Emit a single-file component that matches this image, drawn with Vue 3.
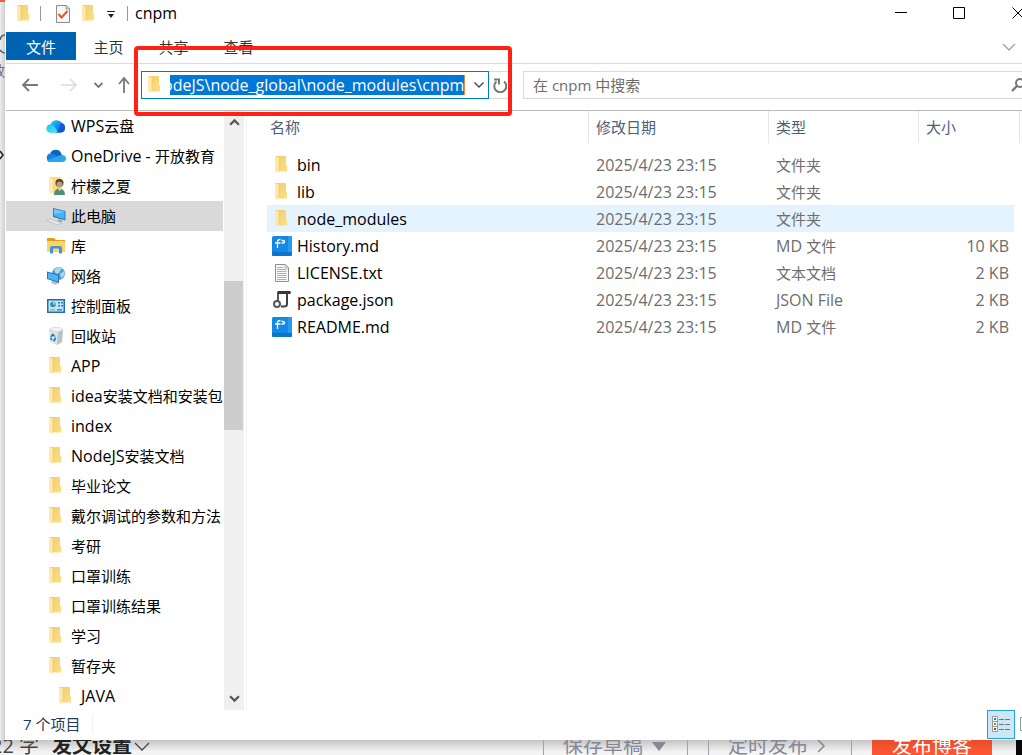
<script setup>
import { ref, onMounted } from 'vue'

const address = ref(null)
onMounted(() => {
  address.value.scrollLeft = address.value.scrollWidth
})

const places = [
  { name: 'WPS云盘', icon: 'wps' },
  { name: 'OneDrive - 开放教育', icon: 'onedrive' },
  { name: '柠檬之夏', icon: 'user' },
  { name: '此电脑', icon: 'pc', selected: true },
  { name: '库', icon: 'library' },
  { name: '网络', icon: 'network' },
  { name: '控制面板', icon: 'control' },
  { name: '回收站', icon: 'recycle' },
  { name: 'APP', icon: 'folder' },
  { name: 'idea安装文档和安装包', icon: 'folder' },
  { name: 'index', icon: 'folder' },
  { name: 'NodeJS安装文档', icon: 'folder' },
  { name: '毕业论文', icon: 'folder' },
  { name: '戴尔调试的参数和方法', icon: 'folder' },
  { name: '考研', icon: 'folder' },
  { name: '口罩训练', icon: 'folder' },
  { name: '口罩训练结果', icon: 'folder' },
  { name: '学习', icon: 'folder' },
  { name: '暂存夹', icon: 'folder' },
  { name: 'JAVA', icon: 'folder', nested: true }
]

const date = '2025/4/23 23:15'
const files = [
  { name: 'bin', icon: 'folder', type: '文件夹', size: '' },
  { name: 'lib', icon: 'folder', type: '文件夹', size: '' },
  { name: 'node_modules', icon: 'folder', type: '文件夹', size: '', hover: true },
  { name: 'History.md', icon: 'md', type: 'MD 文件', size: '10 KB' },
  { name: 'LICENSE.txt', icon: 'txt', type: '文本文档', size: '2 KB' },
  { name: 'package.json', icon: 'json', type: 'JSON File', size: '2 KB' },
  { name: 'README.md', icon: 'md', type: 'MD 文件', size: '2 KB' }
]

// Latin runs are set one pixel larger than the Chinese text beside them.
const runs = (text) =>
  text.split(/([\x20-\x7e]+)/).filter(Boolean).map((t) => ({ t, latin: /^[\x20-\x7e]/.test(t) }))
</script>

<template>
  <svg class="defs" aria-hidden="true">
    <defs>
      <linearGradient id="gWps" x1="0" x2="1" y1="0" y2="0.6">
        <stop offset="0" stop-color="#30e0e8" /><stop offset="0.5" stop-color="#1aa4f5" /><stop offset="1" stop-color="#1450dc" />
      </linearGradient>
      <linearGradient id="gDisc" x1="0" x2="0.6" y1="0" y2="1">
        <stop offset="0" stop-color="#1fc3ee" /><stop offset="1" stop-color="#3ce6ee" />
      </linearGradient>
      <linearGradient id="gFold" x1="0" x2="1" y1="0" y2="1">
        <stop offset="0" stop-color="#efcb6e" /><stop offset="1" stop-color="#ffdf85" />
      </linearGradient>
      <symbol id="i-folder" viewBox="0 0 20 20">
        <path d="M3 1h11v9h1v6.500H6z" fill="url(#gFold)" />
        <path d="M3 1l4 2v13l-2 2-2-2z" fill="#ffe9ab" />
        <path d="M7 3v13" stroke="#efca6a" stroke-width="0.700" />
      </symbol>
      <symbol id="i-wps" viewBox="0 0 20 20">
        <path d="M4.500 16.500a4 4 0 0 1 0-8A6.500 6.500 0 0 1 16 7a5 5 0 0 1-1 9.500z" fill="url(#gWps)" />
        <path d="M4.500 16.500a4 4 0 1 1 3.500-6.500l4.500 6.500z" fill="url(#gDisc)" />
        <path d="M10 16.500q3.500-2 5-9.500 4 1 4 5 0 4.500-4.500 4.500z" fill="#1457df" />
      </symbol>
      <symbol id="i-onedrive" viewBox="0 0 20 20">
        <path d="M4 8a6 6 0 0 1 11.500 0l1 3-4 3z" fill="#1066bd" />
        <path d="M4 16A4.400 4.400 0 0 1 4 7.500q2.500 0 4 1l5 3z" fill="#1384dc" />
        <path d="M1 14.500L13 9.500Q19 7.500 20 12q0 4-4 4H4q-2 0-3-1.500z" fill="#2ba4ef" />
      </symbol>
      <symbol id="i-user" viewBox="0 0 20 20">
        <path d="M3 1h12v16H5l-2-1z" fill="#ffd978" /><path d="M3 1l4 2v14l-2 1-2-2z" fill="#ffebb2" />
        <circle cx="13.500" cy="7" r="4" fill="#49443d" /><circle cx="13.500" cy="8.500" r="3" fill="#c89870" />
        <path d="M8 19q0-6 5-6.500 6 0 6 6.500z" fill="#4d9272" /><path d="M12 13l2 2 1-2z" fill="#f3f3ef" />
      </symbol>
      <symbol id="i-pc" viewBox="0 0 20 20">
        <path d="M7 2l12.500 3v9.500L7 11z" fill="#3c78a8" /><path d="M8 3.300l10.500 2.500v7.200L8 10z" fill="#41b4fa" /><path d="M8 3.300l10.500 2.500L8 8z" fill="#76ccff" />
        <path d="M12 13l4 1v2h-4z" fill="#9eabb3" /><path d="M.5 14.500l4-1.500 11 4-4 2z" fill="#e3e8eb" stroke="#aab4bb" stroke-width="0.600" />
      </symbol>
      <symbol id="i-library" viewBox="0 0 20 20">
        <path d="M1 2h7l2 2h9v4H1z" fill="#dba016" /><path d="M1 5h18v11H1z" fill="#ffd466" />
        <path d="M4 17.500V12q0-2 2-2h8q2 0 2 2v5.500h-3v-5H7v5z" fill="#4096d8" />
      </symbol>
      <symbol id="i-network" viewBox="0 0 20 20">
        <circle cx="12.500" cy="7.500" r="6.500" fill="#4e9dc9" /><path d="M8 4q3-4 8-2l-3 5-3 1zM14 8l4-3q2 5-3 7z" fill="#a7d7ea" />
        <path d="M6 14h6l1 3-4 2-4-2z" fill="#b4c5cf" /><path d="M1 5.500l12 3V17L1 13z" fill="#2b73b9" /><path d="M2 6.800l10 2.600v6L2 12.500z" fill="#4bb4f5" />
      </symbol>
      <symbol id="i-control" viewBox="0 0 20 20">
        <path d="M1 3h18v14H1z" fill="#1b71ae" /><path d="M2.500 4.500h15v11h-15z" fill="#bfe6fa" />
        <circle cx="7" cy="8.500" r="2.800" fill="#2e8bd0" /><path d="M7 5v3.500h3z" fill="#ffc04c" />
        <path d="M12 6h2v1.500h-2zM15 6h2v1.500h-2zM12 9h2v1.500h-2zM15 9h2v1.500h-2z" fill="#3479aa" /><path d="M4 13h5v1.500H4z" fill="#f3a32b" /><path d="M11 13h5v1.500h-5z" fill="#2e8bd0" />
      </symbol>
      <symbol id="i-recycle" viewBox="0 0 20 20">
        <path d="M3 4l9 1 5-1-1 12-5 3-7-3z" fill="#dfe4e7" /><path d="M12 5l5-1-1 12-5 3z" fill="#b8c2c8" /><path d="M3 4l5-3 3 1 2-1 4 3-5 2z" fill="#f2f4f5" stroke="#bcc7cd" stroke-width="0.600" />
        <path d="M4.800 11l2-2.500 2 2M9.500 11.500l-1 3H7M6 14l-1.500-2" fill="none" stroke="#177ac2" stroke-width="1.600" />
      </symbol>
      <symbol id="i-md" viewBox="0 0 20 20">
        <rect width="20" height="20" rx="1.500" fill="#1588e1" /><path d="M0 16h16V0h2.500Q20 0 20 1.500V18.500Q20 20 18.500 20h-17Q0 20 0 18.500z" fill="#0b74cb" /><path d="M16 0h2.500Q20 0 20 1.500V16h-4z" fill="#249cf0" />
        <path d="M5.500 12V5.500q0-2 3-2M3 7h5.500M9.500 4.500H11q1.500 0 1.500 1.200T11 7h-1.500" fill="none" stroke="#fff" stroke-width="1.300" />
      </symbol>
      <symbol id="i-txt" viewBox="0 0 20 20">
        <path d="M3.500 1.500h10l3 3v14h-13z" fill="#fafafa" stroke="#8f8f8f" /><path d="M13 1.500v3.500h3.500M5 4.500h6M5 6.500h9.500M5 8.500h9.500M5 10.500h9.500M5 12.500h9.500M5 14.500h9.500M5 16.500h9.500" fill="none" stroke="#9b9b9b" stroke-width="0.800" />
      </symbol>
      <symbol id="i-json" viewBox="0 0 20 20">
        <path d="M6 11V2.500h12.500" fill="none" stroke="#55585a" stroke-width="2" />
        <path d="M6 2.500h12.500" stroke="#333537" stroke-width="3" />
        <path d="M15 3v11q0 2.500-3 2.500H9" fill="none" stroke="#3e4042" stroke-width="2" />
        <circle cx="5" cy="14" r="3" fill="#fff" stroke="#55585a" stroke-width="2" />
      </symbol>
    </defs>
  </svg>

  <div class="desktop">
    <div class="upper">
      <aside class="backdrop-edge" aria-hidden="true">
        <i class="orange"></i>
        <svg class="edge-mark" viewBox="0 0 5 170">
          <path d="M5 35Q1 35 0 40M0 50q2 3 5 3" fill="none" stroke="#595d6b" stroke-width="1.500" />
          <path d="M0 151l3 4-3 4" fill="none" stroke="#222" stroke-width="1.500" />
        </svg>
        <span class="edge-text">效</span>
      </aside>

      <main class="window">
        <header class="titlebar">
          <svg class="ico"><use href="#i-folder" /></svg>
          <i class="sep s1"></i>
          <svg class="t-check" viewBox="0 0 16 20"><path d="M1.500 1.500h10l3 3v14h-13z" fill="#f5f6f8" stroke="#8c8c8c" /><path d="M11 1.500V5h3.500" fill="none" stroke="#8c8c8c" /><path d="M3.500 10l3 3.500 6-6.500" fill="none" stroke="#e8561e" stroke-width="2" /></svg>
          <svg class="ico t-fold2"><use href="#i-folder" /></svg>
          <svg class="t-drop" viewBox="0 0 8 8"><path d="M0 .5h8" stroke="#222" /><path d="M1 3h6L4 7z" fill="#222" /></svg>
          <i class="sep s2"></i>
          <h1>cnpm</h1>
          <div class="controls">
            <button aria-label="最小化"><svg viewBox="0 0 12 12"><path d="M0 5.500h12" stroke="#000" /></svg></button>
            <button aria-label="最大化"><svg viewBox="0 0 12 12"><path d="M.5.500h11v11H.5z" fill="none" stroke="#000" /></svg></button>
            <button class="close" aria-label="关闭"><svg viewBox="0 0 12 12"><path d="M.5.500l11 11M11.500.500l-11 11" stroke="#000" /></svg></button>
          </div>
        </header>

        <nav class="ribbon">
          <button class="file">文件</button>
          <button>主页</button>
          <button>共享</button>
          <button>查看</button>
          <button class="expand" aria-label="展开功能区"><svg viewBox="0 0 14 8"><path d="M1 1l6 6 6-6" fill="none" stroke="#a3a3a3" stroke-width="1.400" /></svg></button>
        </nav>

        <section class="navbar">
          <div class="arrows">
            <button aria-label="后退"><svg width="16" height="14" viewBox="0 0 16 14"><path d="M7 1L1 7l6 6M1 7h15" fill="none" stroke="#777" stroke-width="1.800" /></svg></button>
            <button aria-label="前进"><svg width="16" height="14" viewBox="0 0 16 14"><path d="M9 1l6 6-6 6M15 7H0" fill="none" stroke="#dcdcdc" stroke-width="1.600" /></svg></button>
            <button aria-label="最近位置"><svg width="9" height="6" viewBox="0 0 9 6"><path d="M.5 1l4 4 4-4" fill="none" stroke="#777" stroke-width="1.800" /></svg></button>
            <button aria-label="向上"><svg width="12" height="16" viewBox="0 0 12 16"><path d="M1 7l5-6 5 6M6 1v15" fill="none" stroke="#777" stroke-width="1.800" /></svg></button>
          </div>
          <div class="address">
            <svg class="ico"><use href="#i-folder" /></svg>
            <input ref="address" aria-label="地址" value="NodeJS\node_global\node_modules\cnpm" />
            <button aria-label="历史地址"><svg width="10" height="6" viewBox="0 0 10 6"><path d="M.5.500L5 5 9.500.500" fill="none" stroke="#444" stroke-width="1.300" /></svg></button>
          </div>
          <button class="refresh" aria-label="刷新"><svg width="14" height="15" viewBox="0 0 14 15"><path d="M11 3.500a6 6 0 1 1-7.500 0M1 1.500h5v5" fill="none" stroke="#777" stroke-width="2" /></svg></button>
          <div class="search">
            <input aria-label="搜索" placeholder="在 cnpm 中搜索" />
            <svg viewBox="0 0 14 14"><circle cx="9" cy="5" r="4" fill="none" stroke="#777" stroke-width="2" /><path d="M6 8L1 13" stroke="#777" stroke-width="2.400" /></svg>
          </div>
        </section>

        <section class="content">
          <ul class="tree">
            <li v-for="p in places" :key="p.name">
              <button :class="{ selected: p.selected, nested: p.nested }">
                <svg class="ico"><use :href="'#i-' + p.icon" /></svg>
                <span><span v-for="r in runs(p.name)" :key="r.t" :class="{ latin: r.latin }">{{ r.t }}</span></span>
              </button>
            </li>
          </ul>
          <div class="scroll">
            <button aria-label="向上滚动"><svg viewBox="0 0 10 7"><path d="M1 6l4-4 4 4" fill="none" stroke="#555" stroke-width="2" /></svg></button>
            <i class="thumb"></i>
            <button aria-label="向下滚动"><svg viewBox="0 0 10 7"><path d="M1 1l4 4 4-4" fill="none" stroke="#555" stroke-width="2" /></svg></button>
          </div>
          <div class="files">
            <table>
              <colgroup><col /><col class="c-date" /><col class="c-type" /><col class="c-size" /><col class="c-end" /></colgroup>
              <thead><tr><th>名称</th><th>修改日期</th><th>类型</th><th>大小</th><th></th></tr></thead>
              <tbody>
                <tr v-for="f in files" :key="f.name" :class="{ hover: f.hover }">
                  <td class="name latin"><div><svg class="ico"><use :href="'#i-' + f.icon" /></svg>{{ f.name }}</div></td>
                  <td class="latin">{{ date }}</td>
                  <td><span v-for="r in runs(f.type)" :key="r.t" :class="{ latin: r.latin }">{{ r.t }}</span></td>
                  <td class="size latin">{{ f.size }}</td><td class="blank"></td>
                </tr>
              </tbody>
            </table>
          </div>
        </section>

        <footer class="status">
          <span>7 个项目</span>
          <button class="view active" aria-label="详细信息"><svg viewBox="0 0 20 18"><path d="M1.500 1.500h5v15h-5zM1.500 6.500h5M1.500 11.500h5" fill="#fff" stroke="#999" /><path d="M3 3h2v2H3z" fill="#357dad" /><path d="M3 8h2v2H3z" fill="#679346" /><path d="M3 13h2v2H3z" fill="#b63324" /><path d="M8 4.500h5M14 4.500h5M8 9.500h5M14 9.500h5M8 14.500h5M14 14.500h5" stroke="#747474" /></svg></button>
          <button class="view next" aria-label="大图标"></button>
        </footer>

        <div class="highlight"></div>
      </main>
    </div>

    <footer class="editor">
      <span class="count">22 字</span>
      <button class="settings">发文设置<svg width="16" height="10" viewBox="0 0 16 10"><path d="M1 1l7 7 7-7" fill="none" stroke="#444" stroke-width="1.300" /></svg></button>
      <button class="box draft">保存草稿<svg width="14" height="9" viewBox="0 0 14 9"><path d="M0 0h14L7 9z" fill="#858795" /></svg></button>
      <button class="box timed">定时发布<svg width="9" height="14" viewBox="0 0 9 14"><path d="M1 1l6 6-6 6" fill="none" stroke="#858795" stroke-width="1.500" /></svg></button>
      <button class="publish">发布博客</button>
      <i class="rail"></i>
    </footer>
  </div>
</template>

<style>
body { margin: 0; overflow: hidden; }
</style>

<style scoped>
* { box-sizing: border-box; }
.defs { position: absolute; width: 0; height: 0; }
.desktop { height: 100vh; display: flex; flex-direction: column; overflow: hidden; font: 15px/20px "Open Sans", "Noto Sans CJK SC", sans-serif; color: #000; }
button { font: inherit; color: inherit; border: 0; background: none; padding: 0; margin: 0; }
svg { display: block; flex: none; }
.latin { font-size: 16px; white-space: pre; }
.ico { width: 20px; height: 20px; }
.upper { flex: 1; min-height: 0; display: flex; }
.backdrop-edge { position: relative; width: 5px; flex: none; overflow: hidden; background: linear-gradient(90deg, #ececec, #cfcfcf); }
.orange { position: absolute; top: 0; left: 0; width: 5px; height: 2px; background: #e96430; }
.edge-mark { position: absolute; top: 0; left: 0; width: 5px; height: 170px; }
.edge-text { position: absolute; top: 61px; right: 0; font-size: 14px; color: #6a6d7c; }
.window { position: relative; flex: 1; min-width: 0; display: flex; flex-direction: column; background: #fff; overflow: hidden; padding-left: 1px; }

.titlebar { height: 32px; flex: none; display: flex; align-items: flex-start; padding-left: 8px; }
.titlebar .ico, .t-check { margin-top: 4px; }
.sep { width: 1px; height: 15px; margin-top: 6px; background: #999; }
.s1 { margin-left: 6px; }
.t-check { width: 16px; height: 20px; margin-left: 14px; }
.t-fold2 { margin-left: 8px; }
.t-drop { width: 8px; height: 8px; margin: 11px 0 0 8px; }
.s2 { margin-left: 12px; }
h1 { margin: 3px 0 0 7px; font: inherit; font-size: 16px; }
.controls { margin-left: auto; display: flex; }
.controls button { width: 58px; height: 26px; display: flex; align-items: center; justify-content: center; }
.controls svg { width: 12px; height: 12px; }
.controls .close { width: 34px; padding-left: 24px; justify-content: flex-start; }

.ribbon { height: 32px; flex: none; display: flex; border-bottom: 1px solid #dadada; color: #333; }
.ribbon button { width: 65px; height: 28px; padding-top: 2px; }
.ribbon .file { width: 70px; background: #0063b1; color: #fff; }
.ribbon .expand { width: 26px; margin-left: auto; display: flex; align-items: center; justify-content: center; }
.expand svg { width: 14px; height: 8px; }

.navbar { height: 47px; flex: none; display: flex; padding-top: 7px; border-bottom: 1px solid #bcbcbc; }
.arrows { width: 135px; flex: none; display: flex; align-items: center; height: 28px; padding-left: 16px; }
.arrows button:nth-child(2) { margin-left: 23px; }
.arrows button:nth-child(3) { margin-left: 17px; }
.arrows button:nth-child(4) { margin-left: 15px; }
.address { width: 348px; height: 28px; flex: none; display: flex; align-items: center; border: 1px solid #0078d7; padding-left: 3px; }
.address input { width: 295px; height: 20px; margin-left: 5px; padding: 0; border: 0; border-right: 1px solid #e18b4a; outline: 0; background: #0078d7; color: #fff; font: inherit; font-size: 16px; }
.address button { flex: 1; display: flex; justify-content: center; padding-left: 5px; }
.refresh { width: 22px; height: 28px; flex: none; display: flex; align-items: center; justify-content: center; border: 1px solid #d9d9d9; border-left: 0; }
.search { flex: 1; min-width: 0; height: 28px; display: flex; align-items: center; margin-left: 12px; border: 1px solid #d9d9d9; border-right: 0; overflow: hidden; }
.search input { flex: 1; min-width: 0; border: 0; outline: 0; padding: 0 0 0 9px; font: inherit; background: none; }
.search input::placeholder { color: #6d6d6d; opacity: 1; }
.search svg { width: 14px; height: 14px; margin-right: -3px; }

.content { flex: 1; min-height: 0; display: flex; overflow: hidden; }
.tree { width: 217px; flex: none; margin: 0; padding: 0; list-style: none; overflow: hidden; }
.tree button { width: 100%; height: 30px; display: flex; align-items: center; gap: 5px; padding-left: 40px; white-space: nowrap; text-align: left; }
.tree .nested { padding-left: 50px; }
.tree .selected { background: #d9d9d9; }
.scroll { width: 20px; flex: none; margin-left: 1px; display: flex; flex-direction: column; justify-content: space-between; align-items: center; background: #f0f0f0; position: relative; }
.scroll button { width: 20px; height: 22px; display: flex; align-items: center; justify-content: center; }
.scroll svg { width: 11px; height: 8px; }
.thumb { position: absolute; top: 170px; left: 0; width: 19px; height: 149px; background: #cdcdcd; }
.files { flex: 1; min-width: 0; margin-left: 2px; padding-left: 20px; border-left: 1px solid #f3f3f3; }
table { width: 100%; border-collapse: separate; border-spacing: 0; table-layout: fixed; }
.c-date { width: 180px; }
.c-type { width: 150px; }
.c-size { width: 95px; }
.c-end { width: 8px; }
th { height: 32px; padding: 0 0 0 7px; border-right: 1px solid #e5e5e5; font-weight: 400; color: #4c607a; text-align: left; }
th:first-child { padding-left: 3px; }
th:nth-child(4) { border-right: 0; }
th:last-child { padding: 0; border-right: 0; }
th:last-child::before { content: ""; display: block; width: 5px; height: 32px; border-right: 1px solid #e5e5e5; }
tbody::before { content: ""; display: block; height: 8px; }
td { height: 27px; padding: 0 0 0 7px; color: #6d6d6d; white-space: nowrap; }
.name { padding-left: 5px; color: #000; }
.name div { display: flex; align-items: center; gap: 5px; }
.size { text-align: right; padding-right: 5px; }
.hover td { background: #e5f3ff; }
td.blank { padding: 0; background: #fff; }

.status { height: 30px; flex: none; display: flex; align-items: center; padding: 0 0 2px 17px; color: #1e395b; }
.status span { padding-right: 12px; border-right: 1px solid #f0f0f0; }
.view { height: 29px; }
.view.active { width: 28px; margin-left: auto; display: flex; align-items: center; justify-content: center; border: 1px solid #26a0da; background: #cce8f6; }
.view svg { width: 20px; height: 18px; }
.view.next { width: 2px; height: 14px; margin-left: 5px; border: 1px solid #999; border-right: 0; }
.highlight { position: absolute; top: 46px; left: 129px; width: 378px; height: 70px; border: 4px solid #ff2116; border-radius: 4px; pointer-events: none; }

.editor { height: 15px; flex: none; display: flex; align-items: center; overflow: hidden; padding-bottom: 3px; font-size: 20px; line-height: 24px; color: #858795; background: linear-gradient(#c4c4c4, #f4f4f4 12px); white-space: nowrap; }
.editor button { display: flex; align-items: center; height: 24px; flex: none; }
.count { width: 56px; margin-left: -9px; color: #444; }
.settings { margin-left: 5px; gap: 2px; font-weight: 700; color: #222; }
.settings svg { margin-top: 2px; }
.box { border: 1px solid #a0a1aa; border-width: 0 1px; padding-left: 19px; }
.editor .box { border-style: solid; border-width: 0 1px; border-color: #a0a1aa; padding-left: 19px; }
.draft { width: 145px; gap: 9px; }
.editor .draft { margin-left: auto; }
.timed { width: 144px; gap: 9px; }
.editor .timed { margin-left: 20px; }
.editor .publish { width: 120px; margin-left: 20px; justify-content: center; color: #fff; background: linear-gradient(#d9482b, #fc5531 16px); }
.rail { width: 6px; height: 24px; margin-left: 24px; background: #080808; flex: none; }
</style>
